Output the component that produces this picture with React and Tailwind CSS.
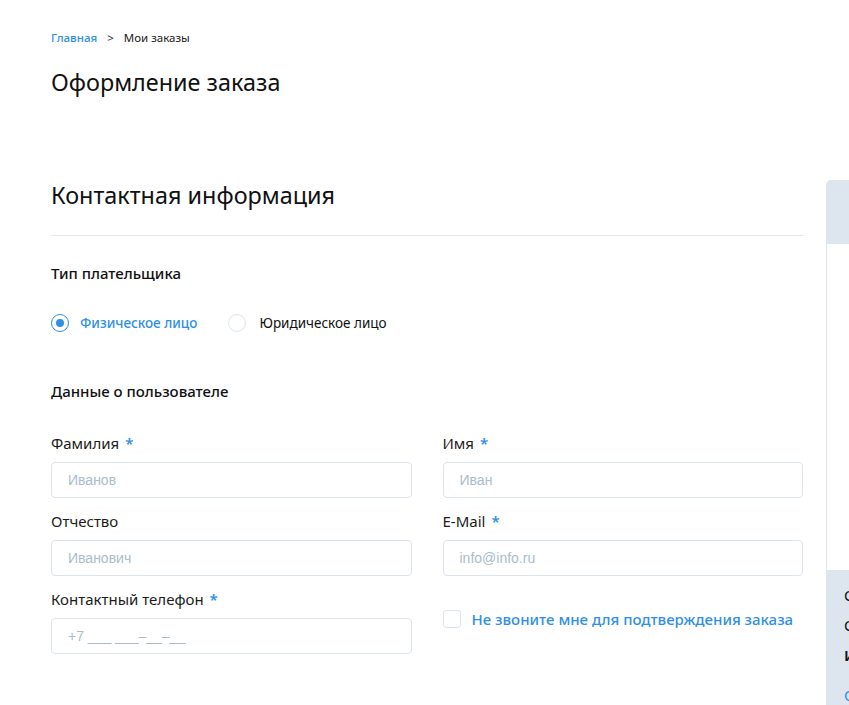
import React from 'react'

const font = { fontFamily: '"Noto Sans", "Open Sans", sans-serif' }
const inputFont = { fontFamily: '"Liberation Sans", Arial, sans-serif' }

const Field = ({ label, required, placeholder }) => (
  <div className="flex flex-col">
    <div className="h-5 flex items-center text-[15px] leading-5 text-[#1b1b1b]">
      {label}
      {required && <span className="ml-[6px] text-[#2f8fe4] font-semibold">*</span>}
    </div>
    <input
      className="mt-[9px] h-[36px] w-full rounded-[4px] border border-[#dce5ee] px-[16px] text-[14px] outline-none placeholder:text-[#a9bccd]"
      style={inputFont}
      placeholder={placeholder}
    />
  </div>
)

export default function App() {
  return (
    <div className="min-h-screen w-full overflow-hidden bg-white" style={font}>
      <div className="pl-[51px]">
        {/* Breadcrumbs */}
        <div className="pt-[30px] flex items-center text-[11.5px] leading-4">
          <a className="text-[#2f8fe4] font-medium">Главная</a>
          <span className="ml-[10px] text-[#222]">&gt;</span>
          <span className="ml-[10px] text-[#222]">Мои заказы</span>
        </div>
        <h1 className="mt-[21px] text-[23.4px] leading-[30px] text-[#111]">Оформление заказа</h1>

        <div className="mt-[83px] flex gap-[23px]">
          {/* Main form */}
          <div className="w-[752px] shrink-0">
            <h2 className="text-[23.4px] leading-[30px] text-[#111]">Контактная информация</h2>
            <div className="mt-[25px] border-t border-[#dfe6ee]" />

            <div className="mt-[27px] text-[15px] leading-5 font-medium text-[#111]">Тип плательщика</div>

            <div className="mt-[30px] flex items-center text-[13.5px]">
              <label className="flex items-center">
                <span className="flex h-[18px] w-[18px] items-center justify-center rounded-full border border-[#2f8fe4]">
                  <span className="h-[8px] w-[8px] rounded-full bg-[#2f8fe4]" />
                </span>
                <span className="ml-[11px] text-[#2f8fe4] font-medium">Физическое лицо</span>
              </label>
              <label className="ml-[31px] flex items-center">
                <span className="h-[18px] w-[18px] rounded-full border border-[#dce5ee]" />
                <span className="ml-[13px] text-[#111]">Юридическое лицо</span>
              </label>
            </div>

            <div className="mt-[48px] text-[15px] leading-5 font-medium text-[#111]">Данные о пользователе</div>

            <div className="mt-[32px] grid grid-cols-2 gap-x-[31px] gap-y-[13px]">
              <Field label="Фамилия" required placeholder="Иванов" />
              <Field label="Имя" required placeholder="Иван" />
              <Field label="Отчество" placeholder="Иванович" />
              <Field label="E-Mail" required placeholder="info@info.ru" />
              <Field label="Контактный телефон" placeholder="+7 ___ ___–__–__" required />
              <div className="flex items-start pt-[21px]">
                <span className="h-[18px] w-[18px] shrink-0 rounded-[3px] border border-[#dce5ee]" />
                <span className="ml-[11px] text-[15px] leading-[18px] font-medium text-[#2f8fe4]">
                  Не звоните мне для подтверждения заказа
                </span>
              </div>
            </div>
          </div>

          {/* Sidebar */}
          <div className="w-[280px] shrink-0">
            <div className="h-[64px] rounded-tl-[5px] bg-[#dde6ef]" />
            <div className="h-[326px] border-l border-[#dde6ef] bg-white" />
            <div className="h-[200px] bg-[#dde6ef] pl-[18px] pt-[10px] text-[15px] leading-[30px] text-[#111]">
              <div>Сумма заказа</div>
              <div>Стоимость доставки</div>
              <div className="font-semibold">Итого</div>
              <div className="mt-[10px] text-[#2f8fe4]">Оформить</div>
            </div>
          </div>
        </div>
      </div>
    </div>
  )
}
